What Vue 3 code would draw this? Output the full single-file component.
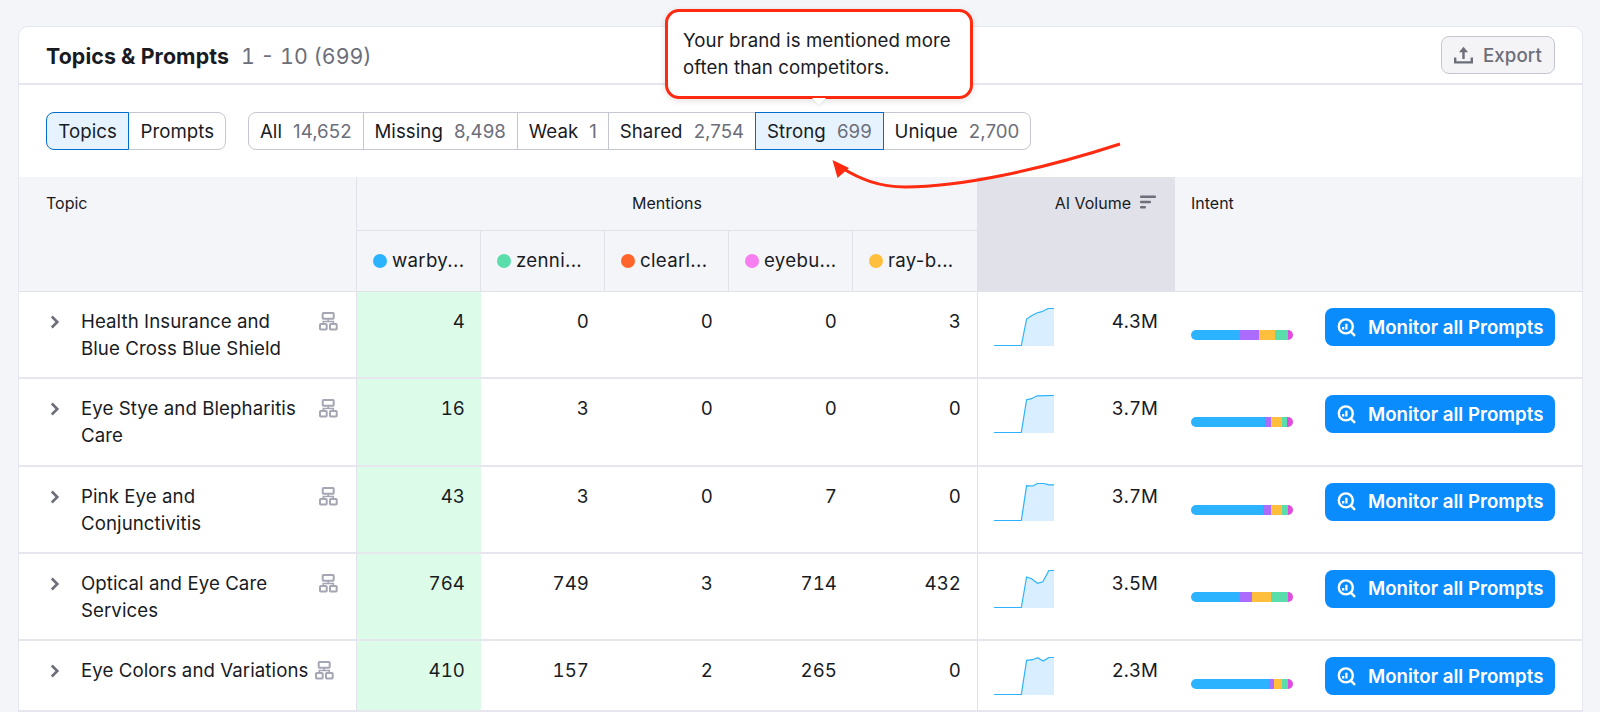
<script setup>
const dots = [
  { name: 'warby...', color: '#2bb3ff' },
  { name: 'zenni...', color: '#59ddaa' },
  { name: 'clearl...', color: '#ff642d' },
  { name: 'eyebu...', color: '#f67ef0' },
  { name: 'ray-b...', color: '#ffbe3b' },
]
const views = [
  { label: 'Topics', on: true },
  { label: 'Prompts' },
]
const filters = [
  { label: 'All', n: '14,652' },
  { label: 'Missing', n: '8,498' },
  { label: 'Weak', n: '1' },
  { label: 'Shared', n: '2,754' },
  { label: 'Strong', n: '699', on: true },
  { label: 'Unique', n: '2,700' },
]
const intentColors = ['#2bb3ff', '#ab6cfe', '#ffbe3b', '#59ddaa', '#e04be0']
const rows = [
  {
    topic: 'Health Insurance and Blue Cross Blue Shield',
    vals: [4, 0, 0, 0, 3], vol: '4.3M',
    line: '0,37.5 27.3,37.5 32.6,11 37.5,7.7 42.8,5 47.7,3.7 54.2,0.5 60,0.5',
    bar: [47.8, 18.7, 16.3, 12, 5.2],
  },
  {
    topic: 'Eye Stye and Blepharitis Care',
    vals: [16, 3, 0, 0, 0], vol: '3.7M',
    line: '0,37.5 27.3,37.5 32.6,4.7 37.5,3.7 43,0.8 60,0.5',
    bar: [72.5, 5.5, 10.8, 5.6, 5.6],
  },
  {
    topic: 'Pink Eye and Conjunctivitis',
    vals: [43, 3, 0, 7, 0], vol: '3.7M',
    line: '0,37.5 27.3,37.5 32.6,2.7 38.7,3 43.5,0.5 49.6,0.5 54.9,1.8 60,1.8',
    bar: [70.5, 8, 11.2, 5.2, 5.1],
  },
  {
    topic: 'Optical and Eye Care Services',
    vals: [764, 749, 3, 714, 432], vol: '3.5M',
    line: '0,37.5 27.3,37.5 32.6,7 37.5,8.7 43.5,13.3 48.8,11.7 54.9,0.5 60,0.5',
    bar: [47.8, 11.6, 19.5, 15.9, 5.2],
  },
  {
    topic: 'Eye Colors and Variations',
    vals: [410, 157, 2, 265, 0], vol: '2.3M',
    line: '0,37.5 27.3,37.5 32.6,3.3 38.7,2.7 43.5,0.7 49.2,4 54.9,0.5 60,0.5',
    bar: [76, 5.2, 8.4, 5.2, 5.2],
  },
]
const areaOf = (line) => `${line} 60,38 0,38`
</script>

<template>
  <div class="page">
    <section class="card">
      <header class="head">
        <div class="title"><strong>Topics &amp; Prompts</strong><span class="range">1 - 10 (699)</span></div>
        <button class="export" type="button">
          <svg width="19" height="18" viewBox="0 0 19 18" fill="none" stroke="#6c6e79" stroke-width="2.4">
            <path d="M9.5 13V3" />
            <path d="M9.5 0.8 14 6.2H5Z" fill="#6c6e79" stroke="none" />
            <path d="M1.2 11.5v4.9h16.6v-4.9" />
          </svg>
          <span>Export</span>
        </button>
      </header>

      <div class="tools">
        <div class="seg views">
          <button v-for="v in views" :key="v.label" type="button" class="seg-btn" :class="{ on: v.on }">{{ v.label }}</button>
        </div>
        <div class="seg">
          <button v-for="f in filters" :key="f.label" type="button" class="seg-btn" :class="{ on: f.on }">
            {{ f.label }}<span class="count">{{ f.n }}</span>
          </button>
        </div>
      </div>

      <div class="thead">
        <div class="th th-topic">Topic</div>
        <div class="th th-mentions">Mentions</div>
        <div class="th th-vol">
          <span>AI Volume</span>
          <svg width="16" height="14" viewBox="0 0 16 14" fill="#6c6e79">
            <rect x="0" y="0.5" width="16" height="2.6" rx="1" />
            <rect x="0" y="5.7" width="11" height="2.6" rx="1" />
            <rect x="0" y="10.9" width="6" height="2.6" rx="1" />
          </svg>
        </div>
        <div class="th th-intent">Intent</div>
        <div v-for="d in dots" :key="d.name" class="th th-brand">
          <i class="dot" :style="{ background: d.color }"></i>{{ d.name }}
        </div>
      </div>

      <div v-for="r in rows" :key="r.topic" class="row">
        <div class="cell topic">
          <svg class="chev" width="10" height="14" viewBox="0 0 10 14" fill="none" stroke="#6c6e79" stroke-width="2.6">
            <path d="M1.8 1.5 7.3 7l-5.5 5.5" />
          </svg>
          <span class="topic-name">{{ r.topic }}</span>
          <svg class="nodes" width="19" height="19" viewBox="0 0 19 19" fill="none" stroke="#a4a6b3" stroke-width="2">
            <rect x="3.7" y="1" width="11" height="5.7" rx="0.8" />
            <rect x="1" y="12" width="6.7" height="5.6" rx="0.8" />
            <rect x="11" y="12" width="6.7" height="5.6" rx="0.8" />
            <path d="M9.2 6.7v2.8M4.3 12V9.5h10V12" stroke-width="1.6" />
          </svg>
        </div>
        <div v-for="(v, i) in r.vals" :key="i" class="cell num" :class="{ good: i === 0 }">{{ v }}</div>
        <div class="cell vol">
          <svg class="spark" width="60" height="38" viewBox="0 0 60 38">
            <polygon :points="areaOf(r.line)" fill="#d9eeff" />
            <polyline :points="r.line" fill="none" stroke="#2bb3ff" stroke-width="1.2" />
          </svg>
          <span>{{ r.vol }}</span>
        </div>
        <div class="cell intent">
          <div class="bar">
            <i v-for="(w, i) in r.bar" :key="i" :style="{ width: w + '%', background: intentColors[i] }"></i>
          </div>
          <button class="monitor" type="button">
            <svg width="21" height="19" viewBox="0 0 21 19" fill="none" stroke="#fff">
              <circle cx="8.8" cy="8.4" r="7" stroke-width="2.4" />
              <path d="M13.8 13.6 18 17.8" stroke-width="2.4" />
              <path d="M6.2 9v2.6M9.4 5.8v5.8" stroke-width="2.2" />
            </svg>
            <span>Monitor all Prompts</span>
          </button>
        </div>
      </div>
    </section>

    <div class="tip">Your brand is mentioned more often than competitors.</div>
    <svg class="callout" width="1600" height="712" viewBox="0 0 1600 712" fill="none">
      <path d="M1120 144C1040 170 960 187 905 187 879 187 860 179 842 168" stroke="#ff2a10" stroke-width="3" />
      <path d="M832.5 160 837.5 178 849 168Z" fill="#ff2a10" />
    </svg>
  </div>
</template>

<style>
html, body { margin: 0; background: #f4f5f9; }
body { height: 712px; overflow: hidden; }
</style>

<style scoped>
.page {
  position: relative;
  height: 712px;
  overflow: hidden;
  padding: 26px 17px 0 18px;
  box-sizing: border-box;
  background: #f4f5f9;
  font-family: Inter, "Liberation Sans", sans-serif;
  color: #191b23;
}
.card {
  background: #fff;
  border: 1px solid #e6e7ee;
  border-radius: 10px 10px 0 0;
  height: 720px;
  box-sizing: border-box;
}
.head {
  height: 58px;
  box-sizing: border-box;
  border-bottom: 2px solid #e6e7ee;
  display: flex;
  align-items: center;
  justify-content: space-between;
  padding: 0 27px;
}
.title { font-size: 21.33px; line-height: 28px; display: flex; align-items: baseline; margin-top: 1px; }
.title strong { font-weight: 700; letter-spacing: 0.1px; }
.range { color: #6c6e79; margin-left: 12px; font-variant-numeric: tabular-nums; }
.export {
  display: flex;
  align-items: center;
  gap: 10px;
  width: 114px;
  height: 38px;
  padding: 0 0 0 12px;
  box-sizing: border-box;
  border: 1px solid #c4c7cf;
  border-radius: 8px;
  background: #f4f4f6;
  color: #6c6e79;
  font: 500 18.67px Inter, sans-serif;
  letter-spacing: 0.1px;
}
.tools {
  height: 92px;
  box-sizing: border-box;
  padding-top: 27px;
  display: flex;
  gap: 21.5px;
  padding-left: 27px;
}
.seg { display: flex; height: 38px; }
.seg-btn {
  height: 38px;
  box-sizing: border-box;
  padding: 0 10.9px;
  margin-left: -1px;
  border: 1px solid #c4c7cf;
  background: #fff;
  color: #191b23;
  font: 400 18.67px Inter, sans-serif;
  letter-spacing: 0.07px;
  white-space: nowrap;
}
.views .seg-btn { padding: 0 11.25px; }
.seg-btn:first-child { margin-left: 0; border-radius: 8px 0 0 8px; }
.seg-btn:last-child { border-radius: 0 8px 8px 0; }
.seg-btn.on {
  position: relative;
  background: #e6f3ff;
  border-color: #006dca;
}
.count { color: #6c6e79; margin-left: 11px; }
.thead {
  display: grid;
  grid-template-columns: 338px repeat(5, 124px) 198px 1fr;
  grid-template-rows: 54px 60px;
  background: #f4f5f9;
  border-bottom: 1px solid #e0e1e9;
  font-size: 16px;
  line-height: 22px;
}
.th { box-sizing: border-box; padding: 15px 16px; }
.th-topic { grid-row: 1 / 3; padding-left: 27px; border-right: 1px solid #e0e1e9; }
.th-mentions { grid-column: 2 / 7; text-align: center; border-bottom: 1px solid #e0e1e9; }
.th-vol {
  grid-column: 7;
  grid-row: 1 / 3;
  background: #e0e1e9;
  display: flex;
  justify-content: flex-end;
  gap: 9px;
  padding-right: 19px;
}
.th-vol svg { margin-top: 3px; }
.th-intent { grid-column: 8; grid-row: 1 / 3; }
.th-brand {
  grid-row: 2;
  display: flex;
  align-items: center;
  padding: 0 0 0 16px;
  font-size: 18.67px;
  letter-spacing: 0.3px;
  border-right: 1px solid #e0e1e9;
  white-space: nowrap;
}
.th-brand:nth-of-type(9) { border-right: 0; }
.dot { width: 14px; height: 14px; border-radius: 50%; margin-right: 5px; flex: none; }
.row {
  display: grid;
  grid-template-columns: 338px repeat(5, 124px) 198px 1fr;
  border-bottom: 2px solid #e6e7ee;
  font-size: 18.67px;
  line-height: 27px;
  letter-spacing: 0.07px;
}
.cell { box-sizing: border-box; padding: 16px 16px 15.25px; min-height: 69px; }
.topic {
  display: flex;
  align-items: flex-start;
  gap: 7px;
  border-right: 1px solid #e0e1e9;
  padding-left: 31px;
  padding-right: 18px;
}
.chev { flex: none; margin: 7px 14px 0 0; }
.topic-name { flex: 0 1 auto; }
.nodes { flex: none; margin-top: 4px; }
.num { text-align: right; font-variant-numeric: tabular-nums; }
.good { background: #dcfce9; }
.vol {
  display: flex;
  justify-content: space-between;
  align-items: flex-start;
  border-left: 1px solid #e0e1e9;
  font-variant-numeric: tabular-nums;
  padding-right: 17px;
}
.spark { display: block; }
.intent { display: flex; align-items: flex-start; padding-right: 27px; }
.bar {
  width: 102px;
  height: 10px;
  margin-top: 22px;
  border-radius: 5px;
  overflow: hidden;
  display: flex;
  flex: none;
}
.bar i { display: block; height: 100%; }
.monitor {
  margin-left: auto;
  width: 230px;
  height: 38px;
  box-sizing: border-box;
  border: 0;
  border-radius: 8px;
  background: #0a8cfd;
  color: #fff;
  font: 600 18.67px Inter, sans-serif;
  display: flex;
  align-items: center;
  gap: 10px;
  padding: 0 0 0 12px;
  white-space: nowrap;
}
.tip {
  position: absolute;
  left: 665px;
  top: 9px;
  width: 308px;
  height: 90px;
  box-sizing: border-box;
  border: 3px solid #ff2a10;
  border-radius: 14px;
  background: #fff;
  padding: 15px 15px;
  font-size: 18.67px;
  letter-spacing: 0.07px;
  line-height: 27px;
  box-shadow: 0 2px 6px rgba(25, 27, 35, 0.12);
}
.tip::after {
  content: "";
  position: absolute;
  left: 144px;
  top: 85.5px;
  width: 0;
  height: 0;
  border-left: 7px solid transparent;
  border-right: 7px solid transparent;
  border-top: 7px solid #fff;
  filter: drop-shadow(0 1px 1px rgba(25, 27, 35, 0.1));
}
.callout { position: absolute; left: 0; top: 0; pointer-events: none; }
</style>
